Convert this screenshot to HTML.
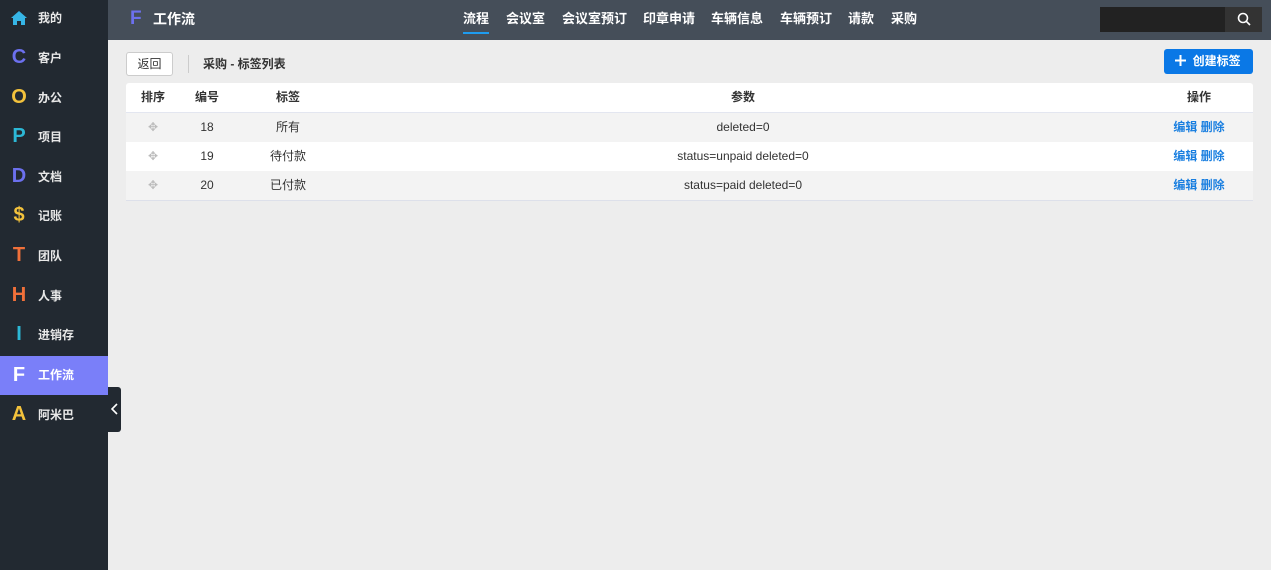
<!DOCTYPE html><html><head><meta charset="utf-8"><style>
*{margin:0;padding:0;box-sizing:border-box}
body{width:1271px;height:570px;overflow:hidden;background:#ededed;font-family:"Liberation Sans","Noto Sans CJK SC",sans-serif;font-size:12px;color:#333;position:relative}
.side{position:absolute;left:0;top:0;width:108px;height:570px;background:#222931}
.si{position:absolute;left:0;width:108px;height:40px;line-height:40px;color:#e8e8e8;font-weight:bold;font-size:12px;white-space:nowrap}
.si .ic{display:inline-block;width:38px;text-align:center;font-size:20px;font-weight:bold;font-family:"Liberation Sans",sans-serif;vertical-align:top;line-height:38px}
.si .tx{display:inline-block;vertical-align:top}
.si.act{background:#7a7ff9;color:#fff}
.top{position:absolute;left:108px;top:0;width:1163px;height:40px;background:#454e59}
.nav{position:absolute;top:0;height:40px;line-height:38px;color:#fff;font-weight:bold;font-size:13px}
.row{position:absolute;left:126px;width:1127px;height:29px;line-height:29px}
.row div{position:absolute;top:0;text-align:center;height:29px}
</style></head><body>
<div class="side">
<div class="si" style="top:-2px"><span class="ic"><svg width="18" height="16" viewBox="0 0 18 16" style="vertical-align:-3px"><path d="M9 1L1 8h2v7h4v-4h4v4h4V8h2z" fill="#36b5e6"/></svg></span><span class="tx">我的</span></div>
<div class="si" style="top:38px"><span class="ic" style="color:#6c70ee">C</span><span class="tx">客户</span></div>
<div class="si" style="top:78px"><span class="ic" style="color:#f3c23c">O</span><span class="tx">办公</span></div>
<div class="si" style="top:117px"><span class="ic" style="color:#2cb8d6">P</span><span class="tx">项目</span></div>
<div class="si" style="top:157px"><span class="ic" style="color:#6c70ee">D</span><span class="tx">文档</span></div>
<div class="si" style="top:196px"><span class="ic" style="color:#f3c23c">$</span><span class="tx">记账</span></div>
<div class="si" style="top:236px"><span class="ic" style="color:#f0703a">T</span><span class="tx">团队</span></div>
<div class="si" style="top:276px"><span class="ic" style="color:#f0703a">H</span><span class="tx">人事</span></div>
<div class="si" style="top:315px"><span class="ic" style="color:#2cb8d6">I</span><span class="tx">进销存</span></div>
<div class="si act" style="top:356px;height:39px;line-height:39px"><span class="ic" style="color:#fff">F</span><span class="tx">工作流</span></div>
<div class="si" style="top:395px"><span class="ic" style="color:#f3c23c">A</span><span class="tx">阿米巴</span></div>
</div>
<div style="position:absolute;left:108px;top:387px;width:13px;height:45px;background:#222931;border-radius:0 3px 3px 0;text-align:center;padding-top:16px"><svg width="8" height="12" viewBox="0 0 8 12"><path d="M6 1L1 6l5 5" stroke="#fff" stroke-width="1.6" fill="none"/></svg></div>
<div class="top">
<div style="position:absolute;left:22px;top:0;line-height:38px;color:#6c70ee;font-size:19px;font-weight:bold">F</div>
<div style="position:absolute;left:45px;top:0;line-height:38px;color:#fff;font-size:14px;font-weight:bold">工作流</div>
</div>
<div class="nav" style="left:463px">流程<div style="position:absolute;left:0;right:0;top:32px;height:2px;background:#1e9cf0"></div></div>
<div class="nav" style="left:506px">会议室</div>
<div class="nav" style="left:562px">会议室预订</div>
<div class="nav" style="left:643px">印章申请</div>
<div class="nav" style="left:711px">车辆信息</div>
<div class="nav" style="left:780px">车辆预订</div>
<div class="nav" style="left:848px">请款</div>
<div class="nav" style="left:891px">采购</div>
<div style="position:absolute;left:1100px;top:7px;width:125px;height:25px;background:#222"></div>
<div style="position:absolute;left:1225px;top:7px;width:37px;height:25px;background:#333;text-align:center;padding-top:5px"><svg width="14" height="14" viewBox="0 0 14 14"><circle cx="6" cy="6" r="4.5" stroke="#fff" stroke-width="1.6" fill="none"/><path d="M9.3 9.3L13 13" stroke="#fff" stroke-width="1.6"/></svg></div>
<div style="position:absolute;left:126px;top:52px;width:47px;height:24px;border:1px solid #ccc;border-radius:3px;background:#fff;text-align:center;line-height:22px">返回</div>
<div style="position:absolute;left:188px;top:55px;width:1px;height:18px;background:#ccc"></div>
<div style="position:absolute;left:203px;top:52px;line-height:24px;font-weight:bold;font-size:12px">采购 - 标签列表</div>
<div style="position:absolute;left:1164px;top:49px;width:89px;height:25px;background:#0a78e6;border-radius:3px;color:#fff;font-weight:bold;line-height:25px;padding-left:11px;white-space:nowrap"><svg width="11" height="11" viewBox="0 0 11 11" style="vertical-align:-1px"><path d="M5.5 0v11M0 5.5h11" stroke="#fff" stroke-width="2"/></svg>&nbsp;&nbsp;创建标签</div>
<div style="position:absolute;left:126px;top:83px;width:1127px;height:118px;background:#fff;border-radius:3px 3px 0 0;border-bottom:1px solid #dde0ea"></div>
<div style="position:absolute;left:126px;top:112px;width:1127px;height:1px;background:#e3e6f0"></div>
<div class="row" style="top:83px;font-weight:bold">
<div style="left:7px;width:40px">排序</div><div style="left:61px;width:40px">编号</div><div style="left:132px;width:60px">标签</div><div style="left:587px;width:60px">参数</div><div style="left:1043px;width:60px">操作</div></div>
<div class="row" style="top:113px;background:#f3f3f3">
<div style="left:17px;width:20px;color:#bbb">✥</div><div style="left:61px;width:40px">18</div><div style="left:122px;width:80px">所有</div><div style="left:417px;width:400px">deleted=0</div><div style="left:1038px;width:70px;color:#1a7fe0;font-weight:bold">编辑 删除</div></div>
<div class="row" style="top:142px">
<div style="left:17px;width:20px;color:#bbb">✥</div><div style="left:61px;width:40px">19</div><div style="left:122px;width:80px">待付款</div><div style="left:417px;width:400px">status=unpaid deleted=0</div><div style="left:1038px;width:70px;color:#1a7fe0;font-weight:bold">编辑 删除</div></div>
<div class="row" style="top:171px;background:#f3f3f3">
<div style="left:17px;width:20px;color:#bbb">✥</div><div style="left:61px;width:40px">20</div><div style="left:122px;width:80px">已付款</div><div style="left:417px;width:400px">status=paid deleted=0</div><div style="left:1038px;width:70px;color:#1a7fe0;font-weight:bold">编辑 删除</div></div>
</body></html>
